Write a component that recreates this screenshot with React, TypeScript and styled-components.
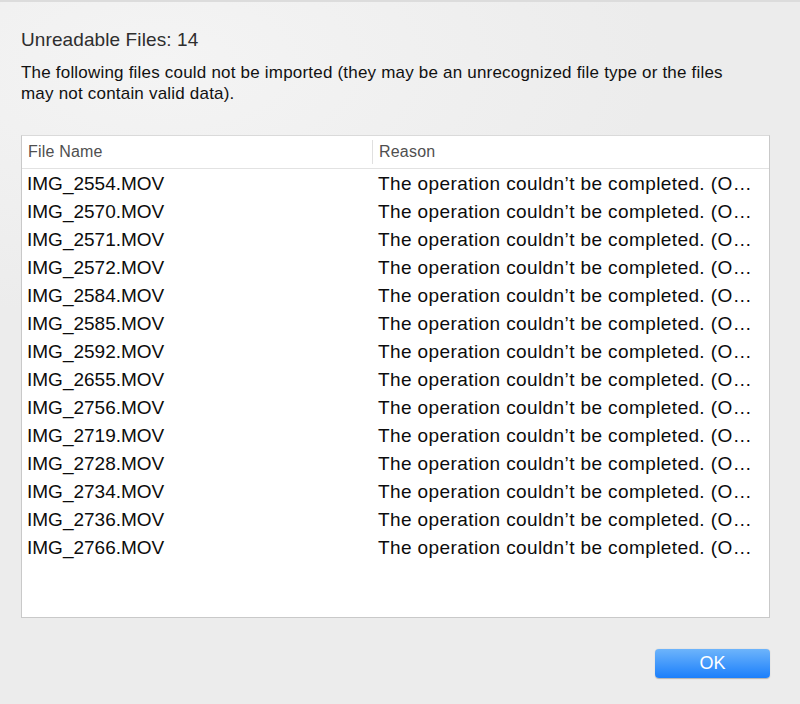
import styled, { createGlobalStyle } from "styled-components";

const GlobalStyle = createGlobalStyle`
    html, body { margin: 0; padding: 0; }
    body {
        font-family: "Liberation Sans", Arial, sans-serif;
        -webkit-font-smoothing: antialiased;
    }
`

const Window = styled.div`
    width: 800px;
    height: 704px;
    box-sizing: border-box;
    border-top: 2px solid #dcdcdc;
    background: radial-gradient(ellipse 500px 260px at 160px 60px, #f4f4f4 0%, #ececec 100%);
    padding: 0 30px 0 21px;
    display: flex;
    flex-direction: column;
`
const Title = styled.h1`
    margin: 26px 0 0 0;
    font-size: 19px;
    letter-spacing: 0.1px;
    font-weight: normal;
    color: #2e2e2e;
    line-height: 24px;
`
const Message = styled.p`
    margin: 10px 0 0 0;
    max-width: 715px;
    font-size: 17px;
    letter-spacing: 0.2px;
    line-height: 21px;
    color: #111;
`
const TableBox = styled.div`
    margin-top: 31px;
    height: 483px;
    box-sizing: border-box;
    background: #fff;
    border: 1px solid #c9c9c9;
    border-top-color: #dadada;
`
const HeaderRow = styled.div`
    display: grid;
    grid-template-columns: 350px 1fr;
    height: 32px;
    margin-bottom: 1px;
    border-bottom: 1px solid #e2e2e2;
    align-items: center;
`
const HeaderCell = styled.div<{ $divider?: boolean }>`
    font-size: 16px;
    letter-spacing: 0.2px;
    color: #4f4f4f;
    padding-left: 6px;
    height: 24px;
    line-height: 24px;
    border-left: ${p => p.$divider ? "1px solid #e0e0e0" : "none"};
`
const Row = styled.div`
    display: grid;
    grid-template-columns: 350px 1fr;
    height: 28px;
    align-items: center;
`
const Cell = styled.div<{ $reason?: boolean }>`
    font-size: 19px;
    letter-spacing: ${p => p.$reason ? "0.4px" : "0"};
    color: #0c0c0c;
    padding-left: ${p => p.$reason ? "6px" : "5px"};
    white-space: nowrap;
    overflow: hidden;
`
const Footer = styled.div`
    display: flex;
    justify-content: flex-end;
    margin-top: 31px;
`
const OkButton = styled.button`
    width: 115px;
    height: 29px;
    border: none;
    border-radius: 4px;
    background: linear-gradient(#6db4fb, #1b7ffb);
    box-shadow: 0 0.5px 1px rgba(0, 0, 0, 0.25);
    color: #fff;
    font-family: "Liberation Sans", Arial, sans-serif;
    font-size: 18px;
    padding: 0;
    cursor: pointer;
`

const files = [
    "IMG_2554.MOV", "IMG_2570.MOV", "IMG_2571.MOV", "IMG_2572.MOV",
    "IMG_2584.MOV", "IMG_2585.MOV", "IMG_2592.MOV", "IMG_2655.MOV",
    "IMG_2756.MOV", "IMG_2719.MOV", "IMG_2728.MOV", "IMG_2734.MOV",
    "IMG_2736.MOV", "IMG_2766.MOV",
];

const reason = "The operation couldn\u2019t be completed. (O\u2026";

function App() {
    return (
        <>
            <GlobalStyle />
            <Window>
                <Title>Unreadable Files: {files.length}</Title>
                <Message>
                    The following files could not be imported (they may be an unrecognized file type or the files
                    may not contain valid data).
                </Message>

                <TableBox>
                    <HeaderRow>
                        <HeaderCell>File Name</HeaderCell>
                        <HeaderCell $divider>Reason</HeaderCell>
                    </HeaderRow>
                    {files.map(file => (
                        <Row key={file}>
                            <Cell>{file}</Cell>
                            <Cell $reason>{reason}</Cell>
                        </Row>
                    ))}
                </TableBox>

                <Footer>
                    <OkButton>OK</OkButton>
                </Footer>
            </Window>
        </>
    );
};

export default App;
